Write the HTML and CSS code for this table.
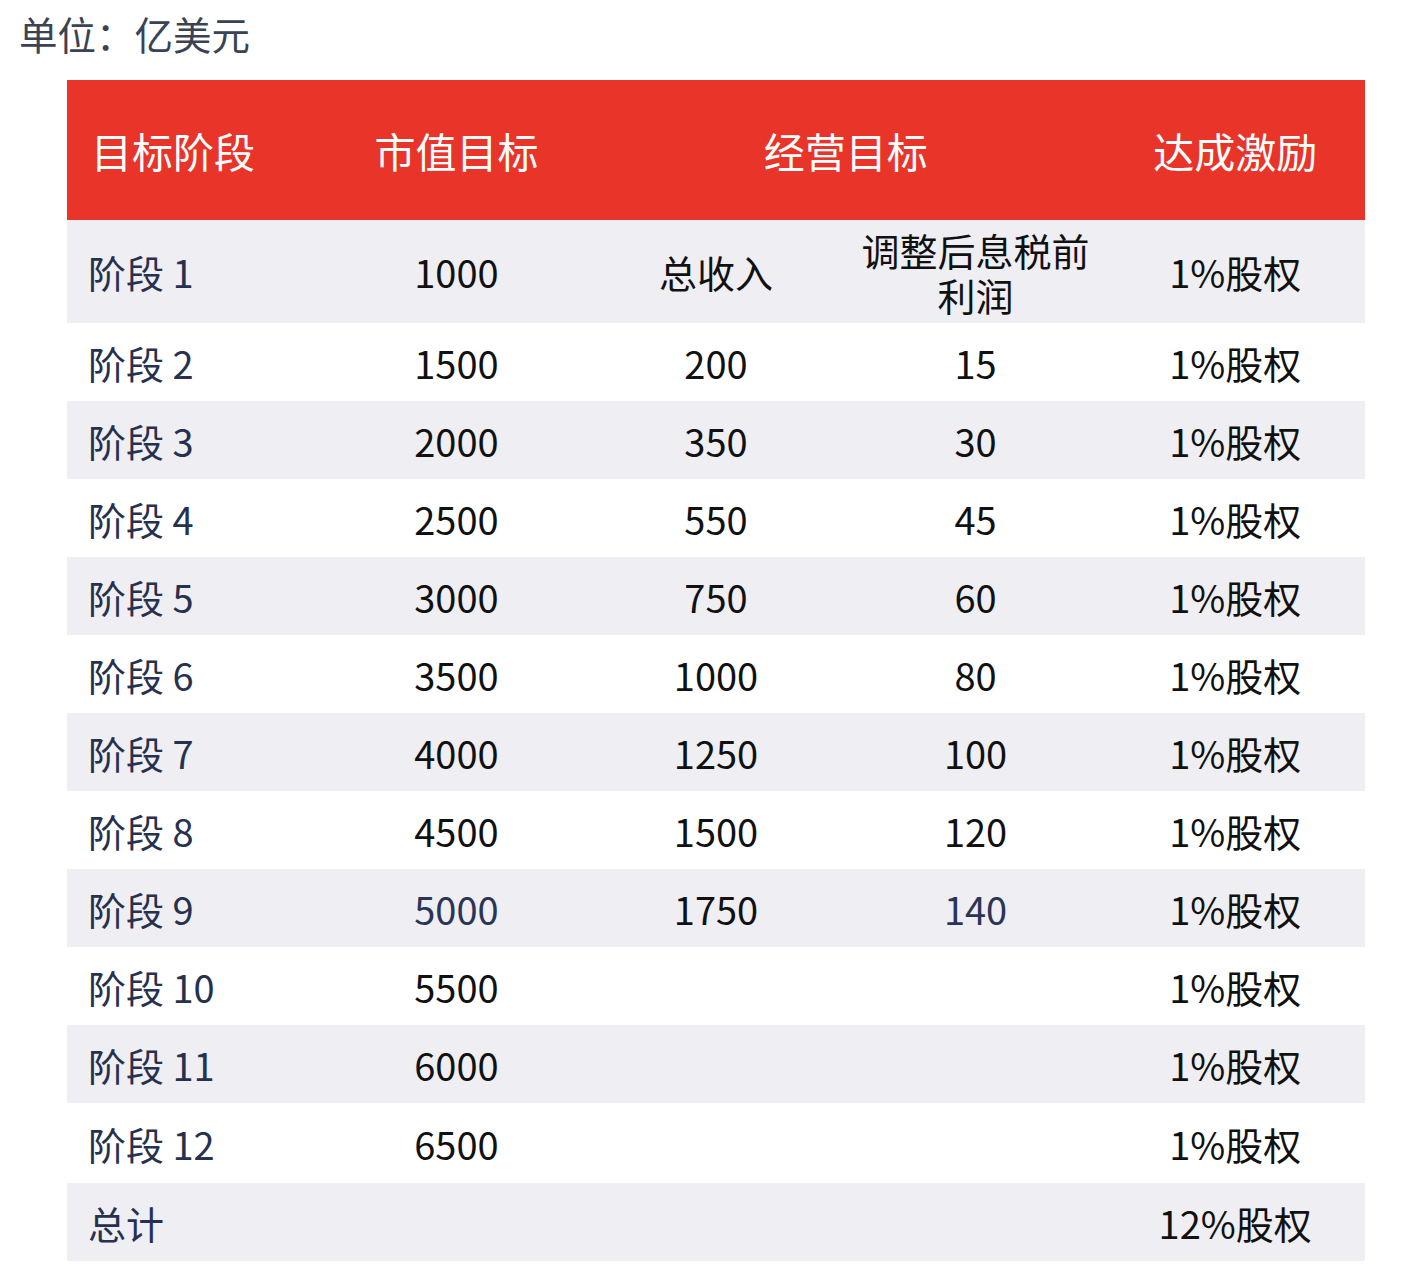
FILE: index.html
```html
<!DOCTYPE html>
<html lang="zh-CN">
<head>
<meta charset="utf-8">
<title>阶段目标</title>
<link rel="stylesheet" href="styles.css">
</head>
<body>
<div class="page">
  <div class="unit">单位：亿美元</div>
  <table class="grid">
    <colgroup><col><col><col><col><col></colgroup>
    <thead>
      <tr>
        <th class="first">目标阶段</th>
        <th>市值目标</th>
        <th colspan="2">经营目标</th>
        <th>达成激励</th>
      </tr>
    </thead>
    <tbody>
      <tr class="tall"><td class="label">阶段 1</td><td>1000</td><td>总收入</td><td class="two">调整后息税前<br>利润</td><td>1%股权</td></tr>
      <tr><td class="label">阶段 2</td><td>1500</td><td>200</td><td>15</td><td>1%股权</td></tr>
      <tr><td class="label">阶段 3</td><td>2000</td><td>350</td><td>30</td><td>1%股权</td></tr>
      <tr><td class="label">阶段 4</td><td>2500</td><td>550</td><td>45</td><td>1%股权</td></tr>
      <tr><td class="label">阶段 5</td><td>3000</td><td>750</td><td>60</td><td>1%股权</td></tr>
      <tr><td class="label">阶段 6</td><td>3500</td><td>1000</td><td>80</td><td>1%股权</td></tr>
      <tr><td class="label">阶段 7</td><td>4000</td><td>1250</td><td>100</td><td>1%股权</td></tr>
      <tr><td class="label">阶段 8</td><td>4500</td><td>1500</td><td>120</td><td>1%股权</td></tr>
      <tr><td class="label">阶段 9</td><td class="navy">5000</td><td>1750</td><td class="navy">140</td><td>1%股权</td></tr>
      <tr><td class="label">阶段 10</td><td>5500</td><td></td><td></td><td>1%股权</td></tr>
      <tr><td class="label">阶段 11</td><td>6000</td><td></td><td></td><td>1%股权</td></tr>
      <tr class="r12"><td class="label">阶段 12</td><td>6500</td><td></td><td></td><td>1%股权</td></tr>
      <tr><td class="label">总计</td><td></td><td></td><td></td><td>12%股权</td></tr>
    </tbody>
  </table>
</div>
</body>
</html>
```
FILE: styles.css
```css
html, body {
  margin: 0;
  padding: 0;
  background: #ffffff;
}
body {
  font-family: "Noto Sans CJK SC", "Noto Sans", sans-serif;
}
.page {
  width: 1405px;
  height: 1273px;
  box-sizing: border-box;
  padding: 14px 0 0 0;
}
.unit {
  margin-left: 19px;
  font-size: 38.5px;
  line-height: 38px;
  color: #3a4253;
  height: 38px;
}
.grid {
  margin: 28px 0 0 67px;
  width: 1298px;
  border-collapse: collapse;
  border-spacing: 0;
  table-layout: fixed;
}
.grid col {
  width: 20%;
}
.grid th {
  background: #e9342a;
  color: #ffffff;
  font-weight: 400;
  font-size: 41px;
  height: 140px;
  padding: 0;
  text-align: center;
  vertical-align: middle;
}
.grid th.first {
  text-align: left;
  padding-left: 24px;
}
.grid td {
  height: 78px;
  padding: 0;
  text-align: center;
  vertical-align: middle;
  font-size: 38px;
  line-height: 45px;
  color: #111111;
}
.grid tbody tr:nth-child(odd) td {
  background: #eeeef3;
}
.grid tr.tall td {
  height: 103px;
}
.grid tr.r12 td {
  height: 80px;
}
.grid td.label {
  text-align: left;
  padding-left: 21px;
  color: #26314f;
}
.grid td.navy {
  color: #2a3556;
}
```
